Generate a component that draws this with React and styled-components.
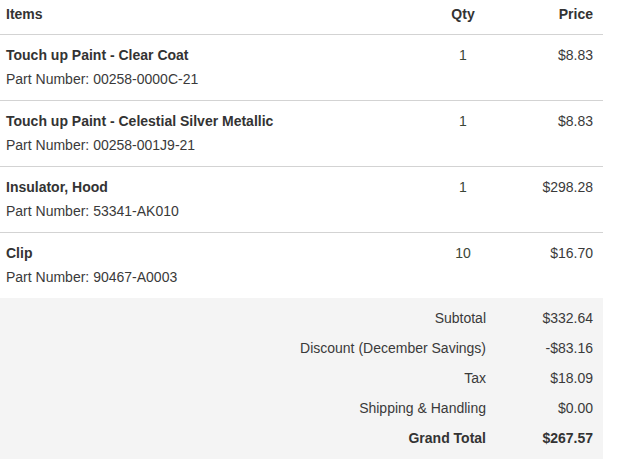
import React from "react";
import styled, { createGlobalStyle } from "styled-components";

const Global = createGlobalStyle`
  html, body { margin: 0; padding: 0; background: #fff; }
  body { font-family: "Liberation Sans", Arial, sans-serif; color: #333; font-size: 14px; }
`;

const Wrap = styled.div`
  width: 603px;
`;

const Row = styled.div`
  display: grid;
  grid-template-columns: 1fr 80px 100px;
  align-items: start;
  border-bottom: ${(p) => (p.$last ? "none" : "1px solid #d3d3d3")};
  height: ${(p) => (p.$header ? "34px" : "65px")};
  box-sizing: content-box;
`;

const HeadCell = styled.div`
  font-weight: bold;
  line-height: 20px;
  padding: 4px ${(p) => (p.$align === "right" ? "10px" : "6px")} 0 6px;
  text-align: ${(p) => p.$align || "left"};
`;

const ItemCell = styled.div`
  padding: 10px 6px 0;
`;

const Title = styled.div`
  font-weight: bold;
  line-height: 20px;
`;

const PartNo = styled.div`
  line-height: 28px;
  color: #3a3a3a;
`;

const NumCell = styled.div`
  line-height: 20px;
  padding: 10px ${(p) => (p.$align === "right" ? "10px" : "0")} 0 0;
  text-align: ${(p) => p.$align};
  color: ${(p) => p.$color || "#3a3a3a"};
`;

const Totals = styled.div`
  background: #f4f4f4;
  padding: 5px 0 6px;
`;

const TotalRow = styled.div`
  display: grid;
  grid-template-columns: 1fr 117px;
  line-height: 30px;
  font-weight: ${(p) => (p.$bold ? "bold" : "normal")};
  color: ${(p) => (p.$bold ? "#333" : "#3a3a3a")};
`;

const TotalLabel = styled.div`
  text-align: right;
`;

const TotalValue = styled.div`
  text-align: right;
  padding-right: 10px;
`;

const items = [
  { name: "Touch up Paint - Clear Coat", part: "00258-0000C-21", qty: 1, price: "$8.83" },
  { name: "Touch up Paint - Celestial Silver Metallic", part: "00258-001J9-21", qty: 1, price: "$8.83" },
  { name: "Insulator, Hood", part: "53341-AK010", qty: 1, price: "$298.28" },
  { name: "Clip", part: "90467-A0003", qty: 10, price: "$16.70" },
];

const totals = [
  ["Subtotal", "$332.64"],
  ["Discount (December Savings)", "-$83.16"],
  ["Tax", "$18.09"],
  ["Shipping & Handling", "$0.00"],
  ["Grand Total", "$267.57", true],
];

export default function App() {
  return (
    <>
      <Global />
      <Wrap>
        <Row $header>
          <HeadCell>Items</HeadCell>
          <HeadCell $align="center">Qty</HeadCell>
          <HeadCell $align="right">Price</HeadCell>
        </Row>
        {items.map((it, i) => (
          <Row key={it.part} $last={i === items.length - 1}>
            <ItemCell>
              <Title>{it.name}</Title>
              <PartNo>Part Number: {it.part}</PartNo>
            </ItemCell>
            <NumCell $align="center" $color="#3b4636">{it.qty}</NumCell>
            <NumCell $align="right">{it.price}</NumCell>
          </Row>
        ))}
        <Totals>
          {totals.map(([l, v, b]) => (
            <TotalRow key={l} $bold={b}>
              <TotalLabel>{l}</TotalLabel>
              <TotalValue>{v}</TotalValue>
            </TotalRow>
          ))}
        </Totals>
      </Wrap>
    </>
  );
}
